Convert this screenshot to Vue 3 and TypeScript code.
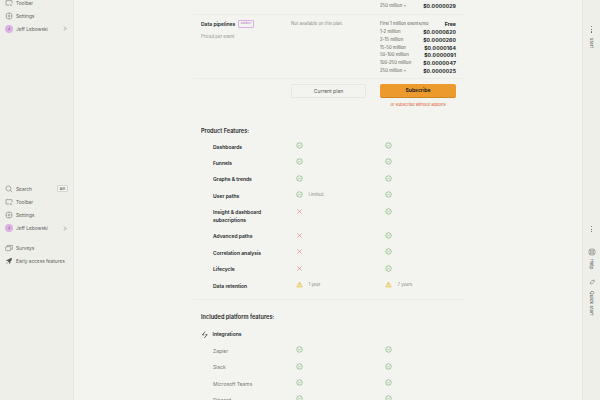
<script setup lang="ts">
type Mark = 'check' | 'cross' | 'warn'
interface Cell { mark: Mark; note?: string }
interface FeatureRow { name: string; free: Cell; paid: Cell }

const ok: Cell = { mark: 'check' }
const no: Cell = { mark: 'cross' }

const prices = [
  ['First 1 million events/mo', 'Free'],
  ['1-2 million', '$0.0000620'],
  ['2-15 million', '$0.0000260'],
  ['15-50 million', '$0.0000164'],
  ['50-100 million', '$0.0000091'],
  ['100-250 million', '$0.0000047'],
  ['250 million +', '$0.0000025'],
]

const productRows: FeatureRow[] = [
  { name: 'Dashboards', free: ok, paid: ok },
  { name: 'Funnels', free: ok, paid: ok },
  { name: 'Graphs & trends', free: ok, paid: ok },
  { name: 'User paths', free: { mark: 'check', note: 'Limited' }, paid: ok },
  { name: 'Insight & dashboard subscriptions', free: no, paid: ok },
  { name: 'Advanced paths', free: no, paid: ok },
  { name: 'Correlation analysis', free: no, paid: ok },
  { name: 'Lifecycle', free: no, paid: ok },
  { name: 'Data retention', free: { mark: 'warn', note: '1 year' }, paid: { mark: 'warn', note: '7 years' } },
]

const integrations = ['Zapier', 'Slack', 'Microsoft Teams', 'Discord']
</script>

<template>
  <div class="page">
    <aside class="sidebar">
      <nav class="nav nav--top">
        <a class="nav__item">
          <svg class="nav__icon" viewBox="0 0 12 12"><path d="M10.500 6.500V2.500h-9v6.500h5M8 7.500l1 2.600.6-1 1 .9" /></svg>
          Toolbar
        </a>
        <a class="nav__item">
          <svg class="nav__icon" viewBox="0 0 12 12"><rect x="2" y="2" width="8" height="8" rx="1.500" /><circle cx="6" cy="6" r="1.400" /><path d="M6 .8V2M6 10v1.200M.8 6H2M10 6h1.200" /></svg>
          Settings
        </a>
        <a class="nav__item">
          <span class="avatar">J</span>
          <span class="nav__grow">Jeff Lebowski</span>
          <svg class="nav__chevron" viewBox="0 0 6 8"><path d="M1.500 1l3 3-3 3" /></svg>
        </a>
      </nav>

      <nav class="nav nav--bottom">
        <a class="nav__item">
          <svg class="nav__icon" viewBox="0 0 12 12"><circle cx="5.200" cy="5.200" r="3.700" /><path d="M8 8l3 3" /></svg>
          <span class="nav__grow">Search</span>
          <kbd class="kbd">⌘K</kbd>
        </a>
        <a class="nav__item">
          <svg class="nav__icon" viewBox="0 0 12 12"><path d="M10.500 6.500V2.500h-9v6.500h5M8 7.500l1 2.600.6-1 1 .9" /></svg>
          Toolbar
        </a>
        <a class="nav__item">
          <svg class="nav__icon" viewBox="0 0 12 12"><rect x="2" y="2" width="8" height="8" rx="1.500" /><circle cx="6" cy="6" r="1.400" /><path d="M6 .8V2M6 10v1.200M.8 6H2M10 6h1.200" /></svg>
          Settings
        </a>
        <a class="nav__item">
          <span class="avatar">J</span>
          <span class="nav__grow">Jeff Lebowski</span>
          <svg class="nav__chevron" viewBox="0 0 6 8"><path d="M1.500 1l3 3-3 3" /></svg>
        </a>
        <div class="nav__gap"></div>
        <a class="nav__item">
          <svg class="nav__icon" viewBox="0 0 12 12"><rect x="1" y="4" width="7.500" height="6" rx="1" /><path d="M3.500 4V2.200h7.500v5.600H8.500" /></svg>
          Surveys
        </a>
        <a class="nav__item">
          <svg class="nav__icon" viewBox="0 0 12 12"><path class="solid" d="M3.500 5.500C5 3 7.500 1.700 10.500 1.500 10.300 4.500 9 7 6.500 8.500zM3 6H1.500l1.500-2h2zM6 9v1.500l2-1.500V7zM3 8l1 1-2.200 1.200z" /></svg>
          <span class="nav__nowrap">Early access features</span>
        </a>
      </nav>
    </aside>

    <main class="main">
      <div class="sheet">
        <div class="price price--orphan">
          <span>250 million +</span>
          <b>$0.0000029</b>
        </div>

        <section class="addon">
          <div class="addon__name">
            <div class="addon__title">
              <strong>Data pipelines</strong>
              <span class="tag">addon</span>
            </div>
            <p class="muted">Priced per event</p>
          </div>
          <p class="muted addon__na">Not available on this plan.</p>
          <div class="addon__prices">
            <div v-for="p in prices" :key="p[0]" class="price">
              <span>{{ p[0] }}</span>
              <b>{{ p[1] }}</b>
            </div>
          </div>
        </section>

        <section class="actions">
          <button class="btn btn--ghost">Current plan</button>
          <div class="actions__paid">
            <button class="btn btn--primary">Subscribe</button>
            <a class="actions__link">or subscribe without addons</a>
          </div>
        </section>

        <h3 class="heading">Product Features:</h3>

        <div v-for="row in productRows" :key="row.name" class="row">
          <div class="row__name">{{ row.name }}</div>
          <div v-for="(cell, i) in [row.free, row.paid]" :key="i" class="row__cell">
            <svg v-if="cell.mark === 'check'" class="mark mark--check" viewBox="0 0 10 10"><circle cx="5" cy="5" r="3.900" /><path d="M3.300 5l1.200 1.200 2.200-2.300" /></svg>
            <svg v-else-if="cell.mark === 'cross'" class="mark mark--cross" viewBox="0 0 10 10"><path d="M2 2l6 6M8 2l-6 6" /></svg>
            <svg v-else class="mark mark--warn" viewBox="0 0 10 10"><path d="M5 1.300L9 8.500H1z" /><path d="M5 4v2.200M5 7.100v.3" /></svg>
            <span v-if="cell.note" class="row__note">{{ cell.note }}</span>
          </div>
        </div>

        <hr class="rule" />

        <h3 class="heading heading--platform">Included platform features:</h3>

        <div class="row row--group">
          <svg class="bolt" viewBox="0 0 10 10"><path d="M5.500.8L1.800 5.200h2.400M4.500 9.200l3.700-4.400H5.800" /></svg>
          <div class="row__name">Integrations</div>
        </div>

        <div v-for="name in integrations" :key="name" class="row">
          <div class="row__name row__name--light">{{ name }}</div>
          <div v-for="col in 2" :key="col" class="row__cell">
            <svg class="mark mark--check" viewBox="0 0 10 10"><circle cx="5" cy="5" r="3.900" /><path d="M3.300 5l1.200 1.200 2.200-2.300" /></svg>
          </div>
        </div>
      </div>
    </main>

    <aside class="rail">
      <div class="rail__top">
        <span class="dots"><i></i><i></i><i></i></span>
        <span class="rail__label">start</span>
      </div>
      <div class="rail__bottom">
        <span class="dots"><i></i><i></i><i></i></span>
        <svg class="rail__icon rail__icon--help" viewBox="0 0 10 10"><circle cx="5" cy="5" r="4" /><circle cx="5" cy="5" r="1.700" /><path d="M2.200 2.200l1.600 1.600M7.800 2.200L6.200 3.800M2.200 7.800l1.600-1.600M7.800 7.800L6.200 6.200" /></svg>
        <span class="rail__label">Help</span>
        <svg class="rail__icon rail__icon--rocket" viewBox="0 0 10 10"><path d="M2.500 6.500C3.500 4 5.500 2.700 8 2.500 7.800 5 6.500 6.800 4 7.500z" /></svg>
        <span class="rail__label">Quick start</span>
      </div>
    </aside>
  </div>
</template>

<style>
html, body { background: #f3f4ef; }
</style>

<style scoped>
.page {
  width: 600px;
  height: 400px;
  display: flex;
  overflow: hidden;
  background: #f3f4ef;
  color: #1d1f27;
  font-family: Inter, "Liberation Sans", sans-serif;
  font-size: 5px;
  line-height: 8px;
}

/* sidebar */
.sidebar {
  width: 73px;
  flex: none;
  background: #eeefe9;
  border-right: 1px solid #e6e7e0;
}
.nav { display: flex; flex-direction: column; padding: 0 5px; }
.nav--top { margin-top: -4px; }
.nav--bottom { margin-top: 146.500px; }
.nav__item {
  height: 13.200px;
  display: flex;
  align-items: center;
  gap: 3px;
  color: #5c5e5a;
  font-size: 4.800px;
}
.nav__grow { flex: 1; }
.nav__nowrap { white-space: nowrap; }
.nav__gap { height: 6.500px; }
.nav__icon {
  width: 8px;
  height: 8px;
  flex: none;
  fill: none;
  stroke: #6b6d68;
  stroke-width: .8;
}
.nav__icon .solid { fill: #55574f; stroke: none; }
.nav__chevron {
  width: 4px;
  height: 5px;
  margin-right: 1px;
  fill: none;
  stroke: #6b6d68;
  stroke-width: 1;
}
.avatar {
  width: 8px;
  height: 8px;
  flex: none;
  border-radius: 50%;
  background: #dcb1e3;
  color: #6d3a78;
  font-size: 4px;
  line-height: 8px;
  text-align: center;
}
.kbd {
  padding: 0 1.500px;
  border: .5px solid #d4d5ce;
  border-radius: 1px;
  background: #f6f6f3;
  color: #44463f;
  font-family: inherit;
  font-size: 3.800px;
  line-height: 5.500px;
}

/* main column */
.main {
  flex: 1;
  min-width: 0;
  padding-left: 119px;
}
.sheet {
  width: 272px;
  margin-top: 2px;
}
.muted { margin: 0; color: #8b8c87; font-size: 4.300px; line-height: 8px; }

.price {
  display: flex;
  justify-content: space-between;
  align-items: center;
  height: 7.900px;
  font-size: 4.300px;
  color: #55574f;
}
.price b { color: #1d1f27; font-size: 5.100px; font-weight: 700; letter-spacing: .1px; }
.price--orphan { margin-left: 187px; width: 76px; }

.addon {
  height: 65px;
  margin-top: 4px;
  padding: 5px 0 0 8px;
  display: grid;
  grid-template-columns: 90px 89px 76px;
  border-top: 1px solid #ebece6;
  border-bottom: 1px solid #ebece6;
  box-sizing: border-box;
}
.addon__title { display: flex; align-items: center; gap: 3px; font-size: 5px; }
.addon__title strong { font-weight: 600; }
.addon__name .muted { margin-top: 5px; }
.addon__na { margin-top: 0; }
.tag {
  padding: 0 1.500px;
  border: .5px solid #dcaee4;
  border-radius: 1px;
  color: #b77cc4;
  font-size: 3.500px;
  line-height: 5.500px;
}

.actions {
  display: grid;
  grid-template-columns: 75px 76px;
  column-gap: 14px;
  padding: 5.500px 0 0 98px;
  height: 48px;
  box-sizing: border-box;
}
.btn {
  width: 100%;
  height: 14px;
  padding: 0;
  border-radius: 2px;
  font-family: inherit;
  font-size: 5px;
  line-height: 1;
}
.btn--ghost {
  background: #f3f4ef;
  border: 1px solid #e6e7e0;
  color: #55574f;
}
.btn--primary {
  background: #ec9a2b;
  border: 0;
  border-bottom: 1px solid #cf8620;
  color: #1d1f27;
  font-weight: 700;
}
.actions__link {
  display: block;
  margin-top: 3px;
  color: #d9552b;
  font-size: 4.100px;
  text-align: center;
}

.heading {
  height: 8px;
  margin: 0 0 3.500px;
  padding-left: 8px;
  font-size: 5.600px;
  font-weight: 600;
  line-height: 8px;
}
.heading--platform { margin-bottom: 5px; }

.row {
  display: grid;
  grid-template-columns: 90px 89px 76px;
  padding: 4.200px 0 4.200px 8px;
  align-items: start;
}
.row__name {
  width: 55px;
  padding-left: 12px;
  font-size: 5px;
  font-weight: 600;
  color: #1d1f27;
}
.row__name--light { font-weight: 400; color: #777873; }
.row__cell { display: flex; align-items: center; height: 8px; gap: 6px; margin-top: -1px; margin-left: 4.500px; }
.row__note { color: #8b8c87; font-size: 4.300px; }
.row--group { display: flex; align-items: center; }
.row--group .row__name { width: auto; padding-left: 4px; }

.mark {
  width: 7px;
  height: 7px;
  flex: none;
  fill: none;
  stroke-width: .8;
}
.mark--check { stroke: #5fa75a; }
.mark--cross { stroke: #d9765a; }
.mark--warn { stroke: #e3b341; fill: #f7e6b4; }
.bolt { width: 7.500px; height: 7.500px; flex: none; fill: none; stroke: #1d1f27; stroke-width: .9; }

.rule {
  height: 0;
  margin: 5px 0 13.500px;
  border: 0;
  border-top: 1px solid #ebece6;
}

/* right rail */
.rail {
  width: 17px;
  flex: none;
  background: #eeefe9;
  border-left: 1px solid #e6e7e0;
  color: #55574f;
}
.rail__top, .rail__bottom {
  display: flex;
  flex-direction: column;
  align-items: center;
}
.rail__top { margin-top: 26px; gap: 5px; }
.rail__bottom { margin-top: 178px; }
.rail__label {
  writing-mode: vertical-rl;
  font-size: 4.800px;
  line-height: 8px;
}
.rail__icon { width: 8px; height: 8px; fill: none; stroke: #6b6d68; stroke-width: .7; }
.rail__icon--help { margin: 16px 0 3px; }
.rail__icon--rocket { margin: 8px 0 5px; }
.dots { display: flex; flex-direction: column; gap: 1.500px; }
.dots i { display: block; width: 1.200px; height: 1.200px; background: #55574f; border-radius: 50%; }
</style>
